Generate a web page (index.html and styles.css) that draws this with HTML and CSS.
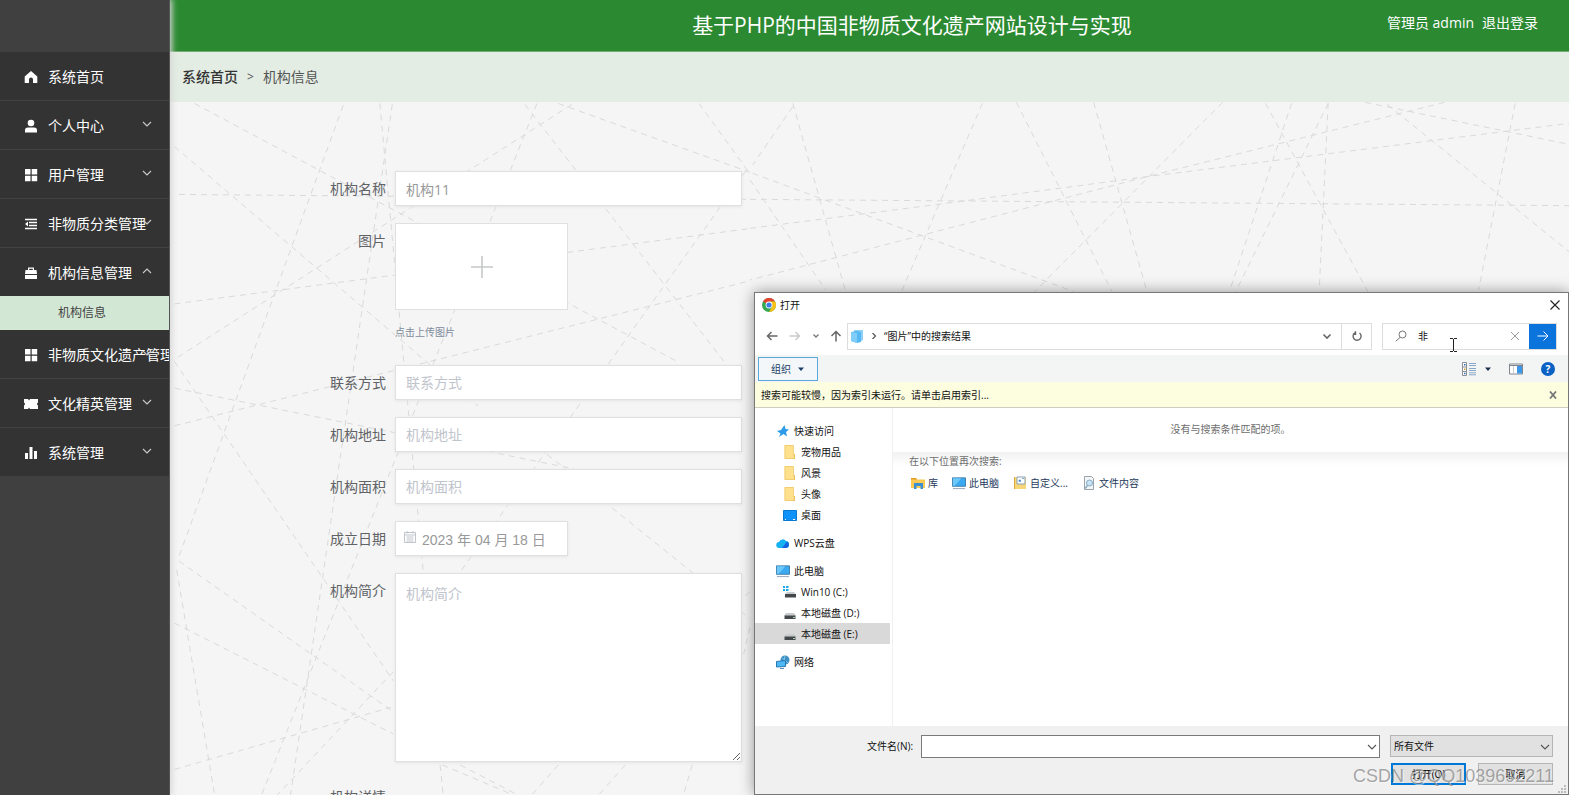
FILE: index.html
```html
<!DOCTYPE html>
<html lang="zh-CN">
<head>
<meta charset="utf-8">
<title>基于PHP的中国非物质文化遗产网站设计与实现</title>
<link rel="stylesheet" href="styles.css">
</head>
<body>
<svg class="defs" aria-hidden="true">
  <symbol id="down" viewBox="0 0 10 10"><path d="M1 3l4 4 4-4" fill="none" stroke="currentColor" stroke-width="1.1"/></symbol>
  <symbol id="up" viewBox="0 0 10 10"><path d="M1 7l4-4 4 4" fill="none" stroke="currentColor" stroke-width="1.1"/></symbol>
  <symbol id="grid" viewBox="0 0 14 14"><path d="M1 1h5.500v5.500H1zM7.700 1h5.500v5.500H7.700zM1 7.700h5.500v5.500H1zM7.700 7.700h5.500v5.500H7.700z" fill="currentColor"/></symbol>
  <symbol id="folder" viewBox="0 0 14 14"><path d="M1.500 0h9v14h-9z" fill="#ffe08c"/><path d="M10.500 9h1.500v5h-1.500z" fill="#f0c14e"/><path d="M2 .5v13h9.500V9.500h-1V.5z" fill="none" stroke="#eec566" stroke-width=".7"/></symbol>
  <symbol id="pc" viewBox="0 0 15 14"><path d="M.5 1.500h14v9H.5z" fill="#3ba9f0" stroke="#3a7ca8"/><path d="M1 2h9l-7 8H1z" fill="#6cc8fa"/><path d="M1 13h13" stroke="#8fa3b5"/></symbol>
  <symbol id="disk" viewBox="0 0 14 14"><path d="M3 7h8l2 3H1z" fill="#c9cccf"/><path d="M1.500 9.500h11V13h-11z" fill="#44484b"/><path d="M10 11.500h2" stroke="#9fd7a5"/></symbol>
</svg>

<div class="app">
  <nav class="sidebar">
    <ul class="menu">
      <li class="item"><a class="link" href="#"><svg class="icon" viewBox="0 0 14 14"><path d="M7 1l6.300 5.500V13H9V9.500a2 2 0 0 0-4 0V13H.7V6.500z" fill="currentColor"/></svg>系统首页</a></li>
      <li class="item"><a class="link" href="#"><svg class="icon" viewBox="0 0 14 14"><circle cx="7" cy="4" r="3.300" fill="currentColor"/><path d="M1 13.500V11q0-2.500 3-2.500h6q3 0 3 2.500v2.500z" fill="currentColor"/></svg>个人中心</a><svg class="arrow"><use href="#down"/></svg></li>
      <li class="item"><a class="link" href="#"><svg class="icon"><use href="#grid"/></svg>用户管理</a><svg class="arrow"><use href="#down"/></svg></li>
      <li class="item"><a class="link" href="#"><svg class="icon" viewBox="0 0 14 14"><path d="M1 2.500h12M5 5.500h8M5 8.500h8M1 11.500h12" stroke="currentColor" stroke-width="1.700"/><path d="M4 4.500v5L1 7z" fill="currentColor"/></svg>非物质分类管理</a><svg class="arrow"><use href="#down"/></svg></li>
      <li class="item item-open"><a class="link" href="#"><svg class="icon" viewBox="0 0 14 14"><path d="M4 4V1.500h6V4h2.500l.5 4H1l.5-4zM5.200 4h3.600V2.700H5.200zM1 9h12v4H1z" fill="currentColor" fill-rule="evenodd"/></svg>机构信息管理</a><svg class="arrow"><use href="#up"/></svg></li>
      <li class="sub"><a class="sublink" href="#">机构信息</a></li>
      <li class="item"><a class="link" href="#"><svg class="icon"><use href="#grid"/></svg>非物质文化遗产管理</a><svg class="arrow"><use href="#down"/></svg></li>
      <li class="item"><a class="link" href="#"><svg class="icon" viewBox="0 0 14 14"><path d="M0 2h4l1 1.500L6 2h8v3.500q-2 1.500 0 3V12H6l-1-1.500L4 12H0V8.500q2-1.500 0-3z" fill="currentColor"/></svg>文化精英管理</a><svg class="arrow"><use href="#down"/></svg></li>
      <li class="item"><a class="link" href="#"><svg class="icon" viewBox="0 0 14 14"><path d="M1 7h3v6H1zM5.500 1h3v12h-3zM10 5h3v8h-3z" fill="currentColor"/></svg>系统管理</a><svg class="arrow"><use href="#down"/></svg></li>
    </ul>
  </nav>

  <div class="main">
    <header class="header">
      <h1 class="title">基于PHP的中国非物质文化遗产网站设计与实现</h1>
      <div class="user"><span>管理员 admin</span><a class="logout" href="#">退出登录</a></div>
    </header>
    <div class="crumbs"><a class="crumb-home" href="#">系统首页</a><span class="crumb-sep">&gt;</span><span>机构信息</span></div>

    <main class="content">
      <svg class="web" aria-hidden="true">
        <g transform="translate(0 -2) scale(.4464 .4433)">
          <path d="M55 8L1140 592M10 105L690 690M20 213L1299 224M388 12L20 1030M470 8L567 1060M498 10L270 1568M822 8L205 1568M900 10L10 585M795 10L1245 595M870 8L1299 163M1185 8L1299 166M1290 160L650 1065M10 460L1299 290M10 735L1299 408M10 650L905 832M10 590L500 1310M20 1040L500 1380M10 1180L500 1430M10 1510L495 1370M500 1290L240 1568M15 1060L100 1568M990 920L1299 1170M610 1500L770 1568M650 1500L780 1568M605 1500L612 1568M870 1500L810 1568M1020 1500L960 1568M1170 1500L1150 1568M845 800L890 835M1299 1110L1280 1125M1299 1190L1285 1250"/>
        </g>
        <g transform="translate(580 -7) scale(.5223 .3333)">
          <path d="M82 35L5 210M82 25L183 590M445 25L290 590M510 22L693 590M658 22L760 590M905 22L545 590M987 25L1183 590M1037 25L920 580M1107 25L930 590M1107 25L1090 580M1178 22L1568 148M1220 28L1568 470M1330 22L760 245L0 555M0 400L400 320L760 245L1568 85M5 235L620 590M0 255L145 585M0 313L1568 332M1465 25L1395 585"/>
        </g>
      </svg>
      <form class="form">
        <div class="row"><label class="label" for="name">机构名称</label><input class="field" id="name" value="机构11"></div>
        <div class="row"><label class="label" for="upload">图片</label>
          <div class="uploader"><button class="upload" id="upload" type="button" aria-label="上传图片"><svg class="plus" viewBox="0 0 24 24"><path d="M12 1v22M1 12h22" stroke="#c6c8c8" stroke-width="1.600"/></svg></button><p class="tip">点击上传图片</p></div></div>
        <div class="row"><label class="label" for="contact">联系方式</label><input class="field" id="contact" placeholder="联系方式"></div>
        <div class="row"><label class="label" for="address">机构地址</label><input class="field" id="address" placeholder="机构地址"></div>
        <div class="row"><label class="label" for="area">机构面积</label><input class="field" id="area" placeholder="机构面积"></div>
        <div class="row"><label class="label" for="date">成立日期</label>
          <div class="datebox"><svg class="cal" viewBox="0 0 12 12"><path d="M.5 1.500h11v10H.5zM.5 4h11M3 0v2.500M9 0v2.500M2.500 6h7M2.500 8h7M2.500 10h7" fill="none" stroke="#c0c4cc"/></svg><input class="field date" id="date" value="2023 年 04 月 18 日"></div></div>
        <div class="row"><label class="label" for="intro">机构简介</label><textarea class="field area" id="intro" placeholder="机构简介"></textarea></div>
        <div class="row"><span class="label">机构详情</span></div>
      </form>
    </main>
  </div>
</div>

<section class="dialog" role="dialog" aria-label="打开">
  <div class="dlg-title">
    <svg class="i14" viewBox="0 0 14 14"><circle cx="7" cy="7" r="7" fill="#34a853"/><path d="M7 7L.9 3.500A7 7 0 0 1 13.100 3.500H7z" fill="#e8412f"/><path d="M7 3.500h6.100A7 7 0 0 1 7 14l3-5.200z" fill="#fbc116"/><circle cx="7" cy="7" r="3.400" fill="#fff"/><circle cx="7" cy="7" r="2.600" fill="#3f7de8"/></svg>
    <span class="grow">打开</span>
    <button class="bare" aria-label="关闭"><svg class="i10" viewBox="0 0 10 10"><path d="M.5.5l9 9M9.500.5l-9 9" stroke="#222" stroke-width="1.100"/></svg></button>
  </div>

  <div class="dlg-nav">
    <div class="arrows">
      <button class="bare" aria-label="后退"><svg class="i12" viewBox="0 0 12 12"><path d="M11.500 6H1.500M5.500 2l-4 4 4 4" fill="none" stroke="#666" stroke-width="1.500"/></svg></button>
      <button class="bare" aria-label="前进"><svg class="i12" viewBox="0 0 12 12"><path d="M.5 6h10M6.500 2l4 4-4 4" fill="none" stroke="#ccc" stroke-width="1.500"/></svg></button>
      <button class="bare" aria-label="最近位置"><svg class="i6" viewBox="0 0 6 6"><path d="M.5 1.500L3 4l2.500-2.500" fill="none" stroke="#777" stroke-width="1.300"/></svg></button>
      <button class="bare" aria-label="上移"><svg class="i12" viewBox="0 0 12 12"><path d="M6 11.500V1.500M1.500 6L6 1.500 10.500 6" fill="none" stroke="#666" stroke-width="1.500"/></svg></button>
    </div>
    <div class="address">
      <svg class="i14" viewBox="0 0 14 14"><path d="M4 1h9v10l-2 1V3H4z" fill="#8fd0f7"/><path d="M1 3l6-1 4 1v10l-4 1-6-2z" fill="#56b8f2"/><path d="M1 3l6 1v10l-6-2z" fill="#7fcdf8"/></svg>
      <svg class="i6" viewBox="0 0 6 6"><path d="M1.500 0l3 3-3 3" fill="none" stroke="#555" stroke-width="1.200"/></svg>
      <span class="grow">“图片”中的搜索结果</span>
      <button class="bare" aria-label="展开"><svg class="i10" viewBox="0 0 10 10"><path d="M1.500 3.500L5 7l3.500-3.500" fill="none" stroke="#666" stroke-width="1.600"/></svg></button>
      <button class="bare refresh" aria-label="刷新"><svg class="i10" viewBox="0 0 10 10"><path d="M7.500 2A4 4 0 1 1 3 1.800M3.500.2v3H.8" fill="none" stroke="#666" stroke-width="1.400"/></svg></button>
    </div>
    <div class="search">
      <svg class="i12" viewBox="0 0 12 12"><circle cx="7.500" cy="4.500" r="3.500" fill="none" stroke="#777"/><path d="M5 7.500L.8 11.200" stroke="#777"/></svg>
      <input class="query" aria-label="搜索" value="非">
      <button class="bare" aria-label="清除"><svg class="i10" viewBox="0 0 10 10"><path d="M1 1l8 8M9 1L1 9" stroke="#999"/></svg></button>
      <button class="go" aria-label="搜索"><svg class="i12" viewBox="0 0 12 12"><path d="M.5 6h10.500M6.500 1.500L11 6l-4.500 4.500" fill="none" stroke="#fff"/></svg></button>
      <svg class="ibeam" viewBox="0 0 7 14"><path d="M0 .5h3M4 .5h3M3.500 1v12M0 13.500h3M4 13.500h3" stroke="#222" stroke-width="1"/></svg>
    </div>
  </div>

  <div class="dlg-tools">
    <button class="organize">组织<svg class="i6" viewBox="0 0 6 6"><path d="M0 1.500h6l-3 3.500z" fill="#1c3f66"/></svg></button>
    <span class="grow"></span>
    <button class="bare view" aria-label="更改视图"><svg class="i14" viewBox="0 0 14 14"><path d="M.5.5h4v13h-4zM.5 5h4M.5 9.500h4" fill="#fff" stroke="#8a8f95"/><path d="M2 2.800h1.500M2 11.500h1.500" stroke="#2f6fb0" stroke-width="1.500"/><path d="M2 7.300h1.500" stroke="#c8a030" stroke-width="1.500"/><path d="M7 1.500h7M7 3.500h7M7 6.500h7M7 8.500h7M7 10.800h7M7 12.800h7" stroke="#8aa6c8"/></svg><svg class="i6" viewBox="0 0 6 6"><path d="M0 1.500h6l-3 3.500z" fill="#1b2f47"/></svg></button>
    <button class="bare" aria-label="预览窗格"><svg class="i14" viewBox="0 0 14 14"><path d="M.5 2h13v10H.5z" fill="#fff" stroke="#7e868e"/><path d="M1 3.500h12" stroke="#7e868e"/><path d="M8 4h5v7.500H8z" fill="#3d97e8"/><path d="M4.500 4v7" stroke="#ccc"/></svg></button>
    <button class="help" aria-label="帮助">?</button>
  </div>

  <div class="notice"><span class="grow">搜索可能较慢，因为索引未运行。请单击启用索引...</span><button class="bare" aria-label="关闭提示"><svg class="i8" viewBox="0 0 8 8"><path d="M1 .5l6 7M7 .5l-6 7" stroke="#777" stroke-width="1.800"/></svg></button></div>

  <div class="dlg-body">
    <ul class="tree">
      <li class="node"><svg class="i14" viewBox="0 0 14 14"><path d="M8.500 1l1 4 3.500.5-3 2.500 1 4.500-3.500-2.500L3 13l1.500-3.500L1 7l4-1z" fill="#2c9be8"/></svg>快速访问</li>
      <li class="node deep"><svg class="i14"><use href="#folder"/></svg>宠物用品</li>
      <li class="node deep"><svg class="i14"><use href="#folder"/></svg>风景</li>
      <li class="node deep"><svg class="i14"><use href="#folder"/></svg>头像</li>
      <li class="node deep"><svg class="i14" viewBox="0 0 14 14"><path d="M.5 2.500h13v10H.5z" fill="#0f93fa" stroke="#0879d0"/><path d="M2 11.500h1M10 11.500h2" stroke="#fff"/></svg>桌面</li>
      <li class="node top"><svg class="i14" viewBox="0 0 14 14"><path d="M3.500 12a3 3 0 0 1-.5-6 4 4 0 0 1 7-1 3.600 3.600 0 0 1 .5 7z" fill="#17b1f2"/><path d="M6 12l5-6.500a3.500 3.500 0 0 1-.5 6.500z" fill="#1764e0"/></svg>WPS云盘</li>
      <li class="node top"><svg class="i14"><use href="#pc"/></svg>此电脑</li>
      <li class="node deep"><svg class="i14" viewBox="0 0 14 14"><path d="M0 1h2v2H0zM3 1h2.500v2H3zM0 4h2v2H0zM3 4h2.500v2H3z" fill="#1ea7e8"/><path d="M4 7h7l2 2.500H2z" fill="#c9cccf"/><path d="M2 9h11v3.500H2z" fill="#44484b"/></svg>Win10 (C:)</li>
      <li class="node deep"><svg class="i14"><use href="#disk"/></svg>本地磁盘 (D:)</li>
      <li class="node deep selected"><svg class="i14"><use href="#disk"/></svg>本地磁盘 (E:)</li>
      <li class="node top"><svg class="i14" viewBox="0 0 14 14"><circle cx="9" cy="5" r="4.500" fill="#3f8fc4"/><path d="M6 3q3 2 6 5M9 .5q-2 4 1 9" fill="none" stroke="#8fd0f0" stroke-width=".8"/><path d="M.5 6.500l9-1v6l-9 .5z" fill="#4db8f5" stroke="#2878b0"/><path d="M4 13.500h4" stroke="#5a8db0"/></svg>网络</li>
    </ul>
    <div class="results">
      <p class="empty">没有与搜索条件匹配的项。</p>
      <div class="again">
        <p class="again-title">在以下位置再次搜索:</p>
        <div class="places">
          <a class="place" href="#"><svg class="i14" viewBox="0 0 14 14"><path d="M0 2h5l1 1.500h8V12H0z" fill="#fbcb55"/><path d="M0 2h5l1 1.500H0z" fill="#df9d28"/><path d="M3 7h9v6H9.500v-3h-4v3H3z" fill="#3c8fd0"/></svg>库</a>
          <a class="place" href="#"><svg class="i14"><use href="#pc"/></svg>此电脑</a>
          <a class="place" href="#"><svg class="i14" viewBox="0 0 14 14"><path d="M1 1h12v12H1z" fill="#f7d579"/><path d="M4 1h8v7H4z" fill="#fff" stroke="#8b9fb4"/><path d="M6 4h1.500v1.500H6zM9 2.500h2" fill="#4a8ad0" stroke="#4a8ad0" stroke-width=".7"/><path d="M1.500 1v12" stroke="#dca93f"/></svg>自定义...</a>
          <a class="place" href="#"><svg class="i14" viewBox="0 0 14 14"><path d="M2.500.5h7l2 2v11h-9z" fill="#f4f6f8" stroke="#9aa2aa"/><circle cx="7.500" cy="7" r="3" fill="#c9e4f5" stroke="#87aac4"/><path d="M5.500 9.500L3 12.500" stroke="#87aac4" stroke-width="1.500"/></svg>文件内容</a>
        </div>
      </div>
    </div>
  </div>

  <div class="dlg-foot">
    <label class="file-label" for="file">文件名(N):</label>
    <div class="combo"><input class="file" id="file"><svg class="combo-arrow"><use href="#down"/></svg></div>
    <div class="side">
      <div class="combo"><select class="types" aria-label="文件类型"><option>所有文件</option></select><svg class="combo-arrow"><use href="#down"/></svg></div>
      <div class="buttons"><button class="btn primary">打开(O)</button><button class="btn">取消</button></div>
    </div>
    <svg class="grip" viewBox="0 0 8 8"><path d="M6 0h2v2H6zM3 3h2v2H3zM6 3h2v2H6zM0 6h2v2H0zM3 6h2v2H3zM6 6h2v2H6z" fill="#bbb"/></svg>
  </div>
  <div class="watermark">CSDN @QQ1039692211</div>
</section>
</body>
</html>
```

FILE: styles.css
```css
* { box-sizing: border-box; }
body {
  margin: 0;
  height: 100vh;
  overflow: hidden;
  position: relative;
  font: 14px/20px "Open Sans", "Noto Sans CJK SC", sans-serif;
  color: #555;
}
ul, p, h1 { margin: 0; padding: 0; list-style: none; }
a { color: inherit; text-decoration: none; }
button, input, select, textarea { font: inherit; color: inherit; margin: 0; }
svg { flex: none; display: block; }
.defs { position: absolute; width: 0; height: 0; }
.grow { flex: 1; }
.i6 { width: 6px; height: 6px; }
.i8 { width: 8px; height: 8px; }
.i10 { width: 10px; height: 10px; }
.i12 { width: 12px; height: 12px; }
.i14 { width: 14px; height: 14px; }
.bare { display: flex; align-items: center; padding: 0; border: 0; background: none; }

.app { display: flex; height: 100%; }

/* Sidebar */
.sidebar {
  flex: none;
  width: 170px;
  padding-top: 52px;
  background: #404040;
  border-right: 1px solid #555;
  box-shadow: 1px 0 6px 1px #d6d6d6;
  z-index: 1;
}
.item {
  position: relative;
  overflow: hidden;
  background: #333;
  border-bottom: 1px solid #424242;
}
.item-open, .item:last-child { border-bottom: 0; }
.link {
  display: flex;
  align-items: center;
  gap: 10px;
  height: 48px;
  padding: 2px 0 0 24px;
  color: #fff;
  white-space: nowrap;
}
.icon { width: 14px; height: 14px; }
.arrow {
  position: absolute;
  top: 18px;
  right: 17px;
  width: 10px;
  height: 10px;
  color: #ccc;
}
.sub { background: #d3e8d4; }
.sublink {
  display: block;
  padding-left: 58px;
  font-size: 12px;
  line-height: 34px;
  color: #444;
}

/* Header */
.main { flex: 1; min-width: 0; display: flex; flex-direction: column; }
.header {
  display: grid;
  grid-template-columns: 1fr auto 1fr;
  align-items: center;
  flex: none;
  height: 52px;
  padding: 0 31px 2px 116px;
  background: #2b8a31;
  border-bottom: 1px solid #72ab74;
  color: #fff;
}
.title { grid-column: 2; font-size: 21px; line-height: 32px; font-weight: 400; }
.user { display: flex; gap: 8px; justify-content: flex-end; padding-bottom: 4px; }
.crumbs {
  display: flex;
  flex: none;
  align-items: center;
  gap: 9px;
  height: 50px;
  padding-left: 12px;
  background: #e3ede3;
}
.crumb-home { color: #333; font-weight: 500; }
.crumb-sep { font-size: 12px; }

/* Form */
.content { position: relative; flex: 1; min-height: 0; overflow: hidden; background: #f5f5f5; }
.web {
  position: absolute;
  inset: 0;
  width: 100%;
  height: 100%;
  fill: none;
  stroke: #dadada;
  stroke-width: 1px;
  stroke-dasharray: 6 5;
}
.web path { vector-effect: non-scaling-stroke; }
.form {
  position: relative;
  display: flex;
  flex-direction: column;
  gap: 17px;
  padding: 69px 0 0 141px;
}
.row { display: flex; align-items: flex-start; gap: 9px; }
.label { width: 75px; line-height: 35px; text-align: right; color: #606266; }
.field {
  width: 347px;
  height: 35px;
  padding: 0 10px;
  border: 1px solid #e0e0e0;
  outline: 0;
  background: #fff;
  box-shadow: 0 1px 3px #e4e4e4;
  color: #999;
}
.field::placeholder { color: #c0c4cc; }
.area { height: 189px; padding-top: 10px; resize: both; display: block; }
.uploader { height: 125px; }
.upload {
  display: flex;
  align-items: center;
  justify-content: center;
  width: 173px;
  height: 87px;
  padding: 0;
  background: #fff;
  border: 1px solid #e0e0e0;
}
.plus { width: 24px; height: 24px; }
.tip { padding-top: 12px; font-size: 10px; color: #7d8b9c; }
.datebox { position: relative; }
.date { width: 173px; padding-left: 26px; font-family: "Liberation Sans", "Noto Sans CJK SC", sans-serif; }
.cal { position: absolute; top: 10px; left: 9px; width: 12px; height: 12px; }

/* File dialog */
.dialog {
  position: absolute;
  z-index: 2;
  top: 292px;
  right: 0;
  bottom: 0;
  left: 754px;
  display: flex;
  flex-direction: column;
  border: 1px solid #777;
  background: #fff;
  box-shadow: 0 0 14px rgba(0, 0, 0, .4);
  font-size: 10px;
  line-height: 16px;
  color: #111;
}
.dlg-title { display: flex; align-items: center; gap: 4px; height: 24px; padding: 0 8px 0 7px; }
.dlg-nav { display: flex; align-items: center; height: 38px; padding: 0 11px; }
.arrows { display: flex; align-items: center; justify-content: space-between; width: 76px; margin-right: 5px; }
.address, .search { display: flex; align-items: center; height: 27px; border: 1px solid #ddd; }
.address { flex: 1; gap: 7px; padding-left: 2px; }
.refresh { align-self: stretch; justify-content: center; width: 30px; border-left: 1px solid #ddd; margin-left: 2px; }
.search { position: relative; width: 175px; margin-left: 10px; padding-left: 12px; gap: 9px; }
.query { flex: 1; min-width: 0; padding: 0 0 0 2px; border: 0; outline: 0; background: none; }
.go { display: flex; align-items: center; justify-content: center; align-self: stretch; width: 27px; padding: 0; border: 0; background: #0a74dc; }
.ibeam { position: absolute; top: 14px; left: 67px; width: 7px; height: 14px; }
.dlg-tools { display: flex; align-items: center; gap: 18px; height: 27px; padding: 0 13px 0 3px; background: #f3f5f5; }
.organize {
  display: flex;
  align-items: center;
  gap: 7px;
  height: 24px;
  padding: 0 13px 0 12px;
  border: 1px solid #5ba8dc;
  background: #f3f7fa;
  color: #1c3f66;
}
.view { gap: 9px; }
.help { width: 14px; height: 14px; padding: 0; border: 0; border-radius: 50%; background: #0b61c4; color: #fff; font-weight: 700; line-height: 14px; }
.notice {
  display: flex;
  align-items: center;
  height: 26px;
  padding: 0 11px 0 6px;
  background: #fdfddf;
  border-bottom: 1px solid #cfcfc0;
}
.dlg-body { display: flex; flex: 1; min-height: 0; }
.tree { width: 138px; padding: 12px 2px 0 0; border-right: 1px solid #f0f0f0; }
.node { display: flex; align-items: center; gap: 4px; height: 21px; padding-left: 21px; }
.deep { padding-left: 28px; }
.top { margin-top: 7px; }
.selected { background: #d9d9d9; }
.results { flex: 1; }
.empty { height: 44px; padding-top: 13px; text-align: center; color: #6d6d6d; }
.again { padding: 1px 16px; background: linear-gradient(#f1f1f1, #fff 14px); }
.again-title { color: #6d6d6d; }
.places { display: flex; gap: 14px; padding: 6px 2px; color: #1e395b; }
.place { display: flex; align-items: center; gap: 3px; }
.dlg-foot {
  position: relative;
  display: flex;
  align-items: flex-start;
  height: 68px;
  padding: 9px 15px 0 112px;
  background: #f0f0f0;
}
.file-label { width: 54px; line-height: 22px; white-space: nowrap; }
.combo { position: relative; flex: none; display: flex; }
.dlg-foot > .combo { flex: 1; }
.combo-arrow { position: absolute; top: 7px; right: 3px; width: 10px; height: 10px; color: #555; pointer-events: none; }
.file { width: 100%; height: 23px; border: 1px solid #7a7a7a; background: #fff; }
.side { display: flex; flex-direction: column; gap: 6px; width: 163px; margin-left: 10px; }
.types { appearance: none; width: 100%; height: 22px; padding: 0 3px; border: 1px solid #b5b5b5; border-radius: 0; background: #e1e1e1; }
.buttons { display: flex; justify-content: space-between; padding-left: 1px; }
.btn { width: 75px; height: 22px; padding: 0; border: 1px solid #b5b5b5; background: #e1e1e1; line-height: 18px; color: #000; }
.primary { border: 2px solid #0078d7; }
.grip { position: absolute; right: 2px; bottom: 1px; width: 8px; height: 8px; }
.watermark {
  position: absolute;
  right: 14px;
  bottom: 7px;
  font: 18px/22px "Liberation Sans", sans-serif;
  color: rgba(120, 120, 120, .65);
  text-shadow: 1px 1px 0 rgba(255, 255, 255, .5);
  pointer-events: none;
}
```
